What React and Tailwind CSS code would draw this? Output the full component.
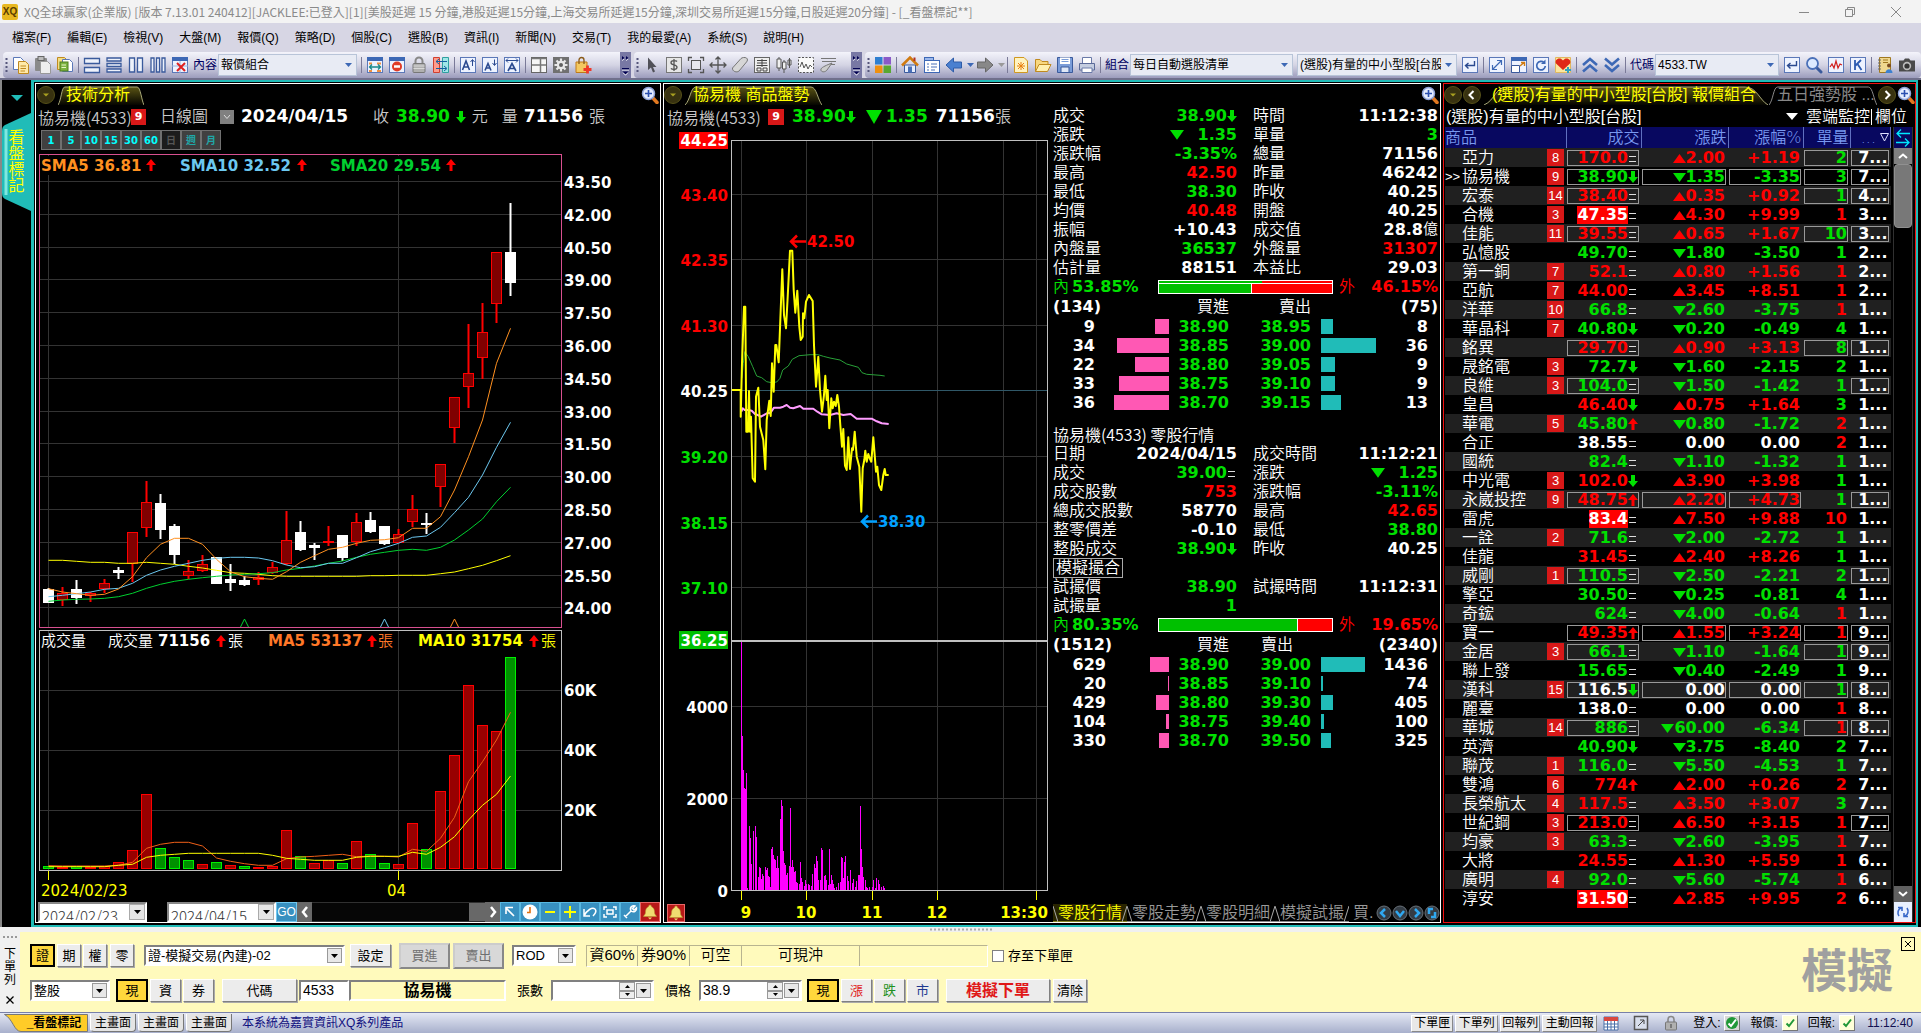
import React from 'react';

const GREEN = '#00e000';
const RED = '#ff0000';
const NUM = "font-['DejaVu_Sans','Noto_Sans_CJK_TC',sans-serif] font-bold";

/* ---------- small glyphs ---------- */

function Arrow({ dir, className = 'h-3.5 w-[10px]' }) {
  const color = dir === 'up' ? RED : GREEN;
  return (
    <svg viewBox="0 0 10 14" className={`${className} shrink-0`}>
      <path d={dir === 'up' ? 'M3.500 13V7H0L5 1L10 7H6.500V13Z' : 'M3 1V7H0L5 13L10 7H7V1Z'} fill={color} />
    </svg>
  );
}

function Tri({ up, className = 'w-[13px]' }) {
  return (
    <svg viewBox="0 0 13 10" className={`${className} shrink-0`}>
      <path d={up ? 'M0 10L6.500 1L13 10Z' : 'M0 1H13L6.500 10Z'} fill={up ? RED : GREEN} />
    </svg>
  );
}

function Equal() {
  return (
    <svg viewBox="0 0 10 14" className="h-3.5 w-[10px] shrink-0">
      <path d="M1 5.500H8M1 10.500H8" stroke="#ddd" fill="none" />
    </svg>
  );
}

function Mark({ kind }) {
  if (kind === 'd') return <Arrow dir="down" />;
  if (kind === 'u') return <Arrow dir="up" />;
  return <Equal />;
}

function Magnifier({ className = '' }) {
  return (
    <svg viewBox="0 0 18 18" className={`h-[18px] w-[18px] shrink-0 ${className}`}>
      <path d="M11 11L16 16.500" stroke="#e07820" strokeWidth="3.500" strokeLinecap="round" />
      <circle cx="7.500" cy="7.500" r="6" fill="#e4ecff" stroke="#8fa3d8" strokeWidth="1.500" />
      <path d="M7.500 4V11M4 7.500H11" stroke="#2a4fb0" strokeWidth="1.600" />
    </svg>
  );
}

function Bell({ className = '' }) {
  return (
    <span className={`flex items-center justify-center border border-[#e86868] bg-[#b81818] ${className}`}>
      <svg viewBox="0 0 16 16" className="h-4 w-4">
        <path d="M8 1C9 1 9.500 2 9.500 2.700C12 3.700 12.500 6 12.500 8.500C12.500 10.500 14 11 14.500 12.500H1.500C2 11 3.500 10.500 3.500 8.500C3.500 6 4 3.700 6.500 2.700C6.500 2 7 1 8 1Z" fill="#f0dc70" stroke="#b89830" strokeWidth="0.600" />
        <path d="M6 13.500H10L8 15.500Z" fill="#f0dc70" />
      </svg>
    </span>
  );
}

/* ---------- toolbar icons ---------- */

const page = (x, y, fill = '#fff', stroke = '#6a7aa8') => (
  <path d={`M${x} ${y}H${x + 7}L${x + 10} ${y + 3}V${y + 12}H${x}Z`} fill={fill} stroke={stroke} />
);
const frame = (fill = '#eef3ff', stroke = '#5b78b8') => <rect x="1.500" y="1.500" width="15" height="15" fill={fill} stroke={stroke} />;
const windowFrame = (
  <g>
    {frame()}
    <path d="M1 1H17V5H1Z" fill="#3d68b5" />
  </g>
);

const ICONS = {
  copy: <g>{page(1.5, 1.5, '#fff', '#5b78b8')}{page(6.5, 5.5, '#ffe9a8', '#c08a20')}<path d="M8.500 10H14M8.500 12.500H14M8.500 15H13" stroke="#c08a20" /></g>,
  paste: <g><rect x="1" y="2" width="12" height="13" rx="1" fill="#8a8a8a" /><rect x="4" y="0.500" width="6" height="4" fill="#bbb" stroke="#666" />{page(6.5, 5.5, '#eee', '#999')}</g>,
  copyGreen: <g>{page(1.5, 1.5, '#f3dc80', '#c08a20')}{page(6.5, 3.5, '#fff', '#5b78b8')}<rect x="4" y="6" width="8" height="9" fill="#7cb342" stroke="#4d7d1e" /><path d="M5.500 9H10M5.500 11.500H10" stroke="#e8f5c8" /></g>,
  rows2: <path d="M1.500 2.500H16.500V7.500H1.500ZM1.500 11.500H16.500V16.500H1.500Z" fill="#eef2fb" stroke="#3a5a9c" strokeWidth="1.300" />,
  rows3: <path d="M2 2H16V5H2ZM2 7.500H16V10.500H2ZM2 13H16V16H2Z" fill="#eef2fb" stroke="#3a5a9c" strokeWidth="1.300" />,
  cols2: <path d="M2.500 2H7.500V16H2.500ZM10.500 2H15.500V16H10.500Z" fill="#eef2fb" stroke="#3a5a9c" strokeWidth="1.300" />,
  cols3: <path d="M2 2H5V16H2ZM7.500 2H10.500V16H7.500ZM13 2H16V16H13Z" fill="#eef2fb" stroke="#3a5a9c" strokeWidth="1.300" />,
  closeWin: <g>{windowFrame}<path d="M9 5V17M1 10H17" stroke="#9cb4dc" /><path d="M6 7L14 15M14 7L6 15" stroke="#e02020" strokeWidth="2" /></g>,
  winH: <g>{windowFrame}<path d="M3 6.500H6V8.500H3ZM11 6.500H15V8.500H11ZM3 14H6V16H3ZM11 14H15V16H11Z" fill="#f09040" /><path d="M4 11H14M6 8.500L3.500 11L6 13.500M12 8.500L14.500 11L12 13.500" stroke="#188a8a" strokeWidth="1.300" fill="none" /></g>,
  winStop: <g>{windowFrame}<circle cx="9" cy="10.500" r="5" fill="#e03c28" /><path d="M6 10.500H12" stroke="#fff" strokeWidth="2.500" /></g>,
  lock: <g><path d="M5.500 8V5A3.500 3.500 0 0 1 12.500 5V8" fill="none" stroke="#888" strokeWidth="2" /><rect x="3" y="7.500" width="12" height="9" rx="1" fill="#b0b0b0" stroke="#777" /><path d="M3.500 10H14.500M3.500 12.500H14.500" stroke="#d8d8d8" /></g>,
  swap: <g><path d="M1.500 1.500H7.500V16.500H1.500Z" fill="#ff9c8c" stroke="#d04030" /><path d="M10.500 1.500H16.500V16.500H10.500Z" fill="#a0e8e8" stroke="#30a0a0" /><path d="M4 5.500H15M7 3L4 5.500L7 8M14 12.500H4M12 10L15 12.500L12 15" stroke="#1560a0" fill="none" /></g>,
  fontUp: <g>{frame()}<path d="M3.500 14L7 5L10.500 14M4.500 11H9.500" stroke="#2b4a90" strokeWidth="1.600" fill="none" /><path d="M13.500 10V4M11.500 6L13.500 3.500L15.500 6" stroke="#2b4a90" fill="none" /></g>,
  fontDown: <g>{frame()}<path d="M4 14.500L7 7.500L10 14.500M5 12H9" stroke="#2b4a90" strokeWidth="1.600" fill="none" /><path d="M13.500 3.500V9M11.500 7L13.500 9.500L15.500 7" stroke="#2b4a90" fill="none" /></g>,
  fontWide: <g>{frame()}<path d="M5 15L9 7.500L13 15M6.500 12.500H11.500" stroke="#2b4a90" strokeWidth="1.600" fill="none" /><path d="M3 4.500H15M5 2.500L3 4.500L5 6.500M13 2.500L15 4.500L13 6.500" stroke="#2b4a90" fill="none" /></g>,
  grid: <g><rect x="1.500" y="1.500" width="15" height="15" fill="#f6f6f6" stroke="#666" /><path d="M1.500 2.500H16.500M10.500 2V16M2 9H16" stroke="#777" strokeWidth="1.500" /></g>,
  gear: <g><rect x="1" y="1" width="16" height="16" fill="#707070" /><path d="M9 2.500V15.500M2.500 9H15.500M4.500 4.500L13.500 13.500M13.500 4.500L4.500 13.500" stroke="#e8e8e8" strokeWidth="2.200" /><circle cx="9" cy="9" r="4.200" fill="#e8e8e8" /><circle cx="9" cy="9" r="2" fill="#606060" /></g>,
  bag: <g><path d="M2 6H13V16.500H2Z" fill="#f4c860" stroke="#c07a18" /><path d="M5 8V4A2.500 2.500 0 0 1 10 4V8" fill="none" stroke="#8a5a18" strokeWidth="1.300" /><path d="M13.500 9.500V17.500M9.500 13.500H17.500" stroke="#f03828" strokeWidth="2.800" /></g>,
  cursor: <path d="M5 1.500V14L8 11.500L10 16.500L12 15.500L10 11H13.500Z" fill="#505058" />,
  dollar: <g><rect x="1.500" y="1.500" width="15" height="15" fill="#e6e6e6" stroke="#777" /><path d="M12 5.500C11 4.300 6 4 6 6.700C6 9.500 12 8.300 12 11.300C12 14 7 13.800 6 12.300M9 3V15" stroke="#555" strokeWidth="1.300" fill="none" /></g>,
  bracket: <g><path d="M1.500 5V1.500H5M13 1.500H16.500V5M16.500 13V16.500H13M5 16.500H1.500V13" stroke="#555" fill="none" strokeWidth="1.300" /><rect x="4.500" y="4.500" width="9" height="9" fill="#e8e8ee" stroke="#555" /></g>,
  move: <path d="M9 1V17M1 9H17M6.500 3.500L9 1L11.500 3.500M6.500 14.500L9 17L11.500 14.500M3.500 6.500L1 9L3.500 11.500M14.500 6.500L17 9L14.500 11.500" stroke="#555" fill="none" strokeWidth="1.300" />,
  eraser: <path d="M1.500 12L10 2.500C11 1.500 14 1 15.500 2C17 3 16.500 5 15.500 6L8 15C6 17 1 15.500 1.500 12Z" fill="#d6d6d6" stroke="#777" />,
  chip: <g><rect x="1.500" y="1.500" width="15" height="15" fill="#eee" stroke="#666" /><path d="M4 4.500H14M4 7H14M3.500 9.500H14.500M4 12H8V15H4ZM10 12H14V15H10ZM9 3V11" stroke="#444" fill="none" /></g>,
  candles: <path d="M4 1V3M4 12V15M2 3H6V12H2ZM9 4V6M9 13V17M7.500 6H11V13H7.500ZM14.500 2V12M13 4H16V9H13Z" fill="#f0f0f0" stroke="#555" />,
  wave: <g><rect x="1.500" y="1.500" width="15" height="15" fill="#fafafa" stroke="#555" strokeDasharray="2 1.500" /><path d="M3 11L5 6L7 12L9 8L11 13L13 9L15 11" stroke="#555" fill="none" /></g>,
  brush: <g><path d="M2 2.500H17M3 5.500H17M9 8.500H16" stroke="#777" /><path d="M13 7L8 14C6 17 1 16 2 13C3 11 8 9 13 7Z" fill="#ccc" stroke="#777" /></g>,
  squares: <g><path d="M1 1H8.500V8.500H1Z" fill="#2f7fd0" /><path d="M9.500 1H17V8.500H9.500Z" fill="#8a5ac8" /><path d="M1 9.500H8.500V17H1Z" fill="#f09010" /><path d="M9.500 9.500H17V17H9.500Z" fill="#58a832" /></g>,
  home: <g><path d="M3.500 9H14.500V16.500H3.500Z" fill="#e8eefc" stroke="#3a5a9c" /><path d="M1 9.500L9 1.500L17 9.500" stroke="#d07a10" strokeWidth="2.500" fill="none" /><path d="M7 10.500H11V16.500H7Z" fill="#4a70b8" /><path d="M12.500 1.500H14.500V5H12.500Z" fill="#b03020" /></g>,
  list: <g><rect x="1.500" y="1.500" width="9" height="4" fill="#9cb8ec" stroke="#3d68b5" /><rect x="1.500" y="4.500" width="15" height="12" fill="#fff" stroke="#3d68b5" /><path d="M4 8H6M4 11H6M4 14H6M8 8H14M8 11H14M8 14H12" stroke="#4a70b8" /></g>,
  left: <path d="M1 9L8.500 2V6H16.500V12H8.500V16Z" fill="#4a80d0" stroke="#2f5ca8" />,
  right: <path d="M17 9L9.500 2V6H1.500V12H9.500V16Z" fill="#888" stroke="#666" />,
  fresh: <g><path d="M2.500 1.500H12L15.500 5V16.500H2.500Z" fill="#fff3c0" stroke="#d09820" /><path d="M9 6V14M5 10H13M6 7L12 13M12 7L6 13" stroke="#e88010" /></g>,
  open: <g><path d="M1.500 15.500V3.500H6L8 5.500H14V8" fill="#f8d880" stroke="#c08a20" /><path d="M1.500 15.500L5 8.500H17L13.500 15.500Z" fill="#fff0b0" stroke="#c08a20" /></g>,
  save: <g><path d="M1.500 1.500H16.500V16.500H1.500Z" fill="#7a9cd8" stroke="#3a5a9c" /><path d="M4 1.500H14V8H4Z" fill="#fff" /><path d="M5 11H13V16.500H5Z" fill="#dfe8f8" stroke="#3a5a9c" /><path d="M5.500 3.500H12.500M5.500 5.500H12.500" stroke="#7a9cd8" /></g>,
  print: <g><path d="M4.500 1.500H13.500V8H4.500Z" fill="#fff" stroke="#6a7aa8" /><path d="M1.500 7.500H16.500V14H1.500Z" fill="#c4cde0" stroke="#5a6a98" /><path d="M4 12H14V16.500H4Z" fill="#fff" stroke="#6a7aa8" /></g>,
  enter: <g>{frame()}<path d="M13.500 5V9.500H5M7.500 7L4.500 9.500L7.500 12.500" stroke="#2b4a90" strokeWidth="1.400" fill="none" /></g>,
  expand: <g>{frame()}<path d="M5 13L13 5M9 4.500H13.500V9M4.500 9V13.500H9" stroke="#3d68b5" strokeWidth="1.200" fill="none" /></g>,
  popout: <g>{windowFrame}<path d="M1.500 9.500H9.500V16.500H1.500Z" fill="#fff" stroke="#3a5a9c" /><path d="M10 10L14 6.500M11 6.500H14.500V10" stroke="#d07a10" strokeWidth="1.400" fill="none" /></g>,
  refresh: <g>{frame()}<path d="M12 6.500A4.300 4.300 0 1 0 13.300 10" stroke="#3d68b5" strokeWidth="1.700" fill="none" /><path d="M13.500 3.500V8H9Z" fill="#3d68b5" /></g>,
  heart: <g><path d="M1.500 1.500H16.500V16.500H1.500Z" fill="#fbe7a0" stroke="#e0b860" /><path d="M9 14L2 7.500C0 3.500 6 0 9 4.500C12 0 18 3.500 16 7.500Z" fill="#e02818" /><path d="M14 11V17M11 14H17" stroke="#30a0c0" strokeWidth="2" /></g>,
  up2: <path d="M2 9L9 3L16 9M2 15.500L9 9.500L16 15.500" stroke="#3d68b5" strokeWidth="2.600" fill="none" />,
  down2: <path d="M2 2.500L9 8.500L16 2.500M2 9L9 15L16 9" stroke="#3d68b5" strokeWidth="2.600" fill="none" />,
  search: <g><path d="M11.500 11.500L16 16" stroke="#3a5a9c" strokeWidth="3" strokeLinecap="round" /><circle cx="7.500" cy="7.500" r="5.500" fill="#dceaff" stroke="#4a70b8" strokeWidth="1.800" /></g>,
  pulse: <g>{frame()}<path d="M3 11L5 8L7 12L9 5L11 12L13 8L15 9" stroke="#d02020" fill="none" strokeWidth="1.200" /></g>,
  kline: <g>{frame()}<path d="M6 4V14M12 4L6.500 9.500M8.500 8L12.500 14" stroke="#2b5ab0" strokeWidth="1.800" fill="none" /></g>,
  book: <g><path d="M3.500 1.500H14.500V16.500H3.500Z" fill="#f0d890" stroke="#a07820" /><path d="M2 4H5M2 7H5M2 10H5M2 13H5" stroke="#666" /><path d="M7 4H12M7 6.500H12" stroke="#a07820" /><circle cx="13" cy="9.500" r="2" fill="#7a4a20" /><path d="M9.500 17C9.500 12 16.500 12 16.500 17Z" fill="#3d80d0" /></g>,
  camera: <g><path d="M1 4.500H5.500L7 2.500H11L12.500 4.500H17V15.500H1Z" fill="#4a4a4a" /><circle cx="9" cy="10" r="4.200" fill="#bbb" /><circle cx="9" cy="10" r="2.600" fill="#333" /></g>,
};

function ToolIcon({ name }) {
  return (
    <button type="button" aria-label={name} className="h-[18px] w-[18px] shrink-0">
      <svg viewBox="0 0 18 18" className="h-[18px] w-[18px]">{ICONS[name]}</svg>
    </button>
  );
}

const Sep = () => <span className="h-4 w-px shrink-0 bg-[#7a7a98]" />;
const Grip = () => (
  <svg viewBox="0 0 3 16" className="ml-0.5 h-4 w-[3px] shrink-0">
    <path d="M1.500 1V16" stroke="#55557a" strokeWidth="2" strokeDasharray="2 2" />
  </svg>
);
const SmallCaret = ({ color = '#3d68b5', className = '' }) => (
  <svg viewBox="0 0 7 4" className={`h-1 w-[7px] shrink-0 ${className}`}><path d="M0 0H7L3.500 4Z" fill={color} /></svg>
);

function More() {
  return (
    <button type="button" aria-label="more" className="ml-auto flex h-[26px] w-[11px] shrink-0 items-center bg-[#7878a4]">
      <svg viewBox="0 0 11 26" className="h-[26px] w-[11px]">
        <path d="M2 5L4.500 7L2 9ZM6 5L8.500 7L6 9ZM2 17H9V18.500H2ZM2.500 20.500H8.500L5.500 23.500Z" fill="#fff" />
        <path d="M2 4L4.500 6L2 8ZM6 4L8.500 6L6 8ZM2 16H9V17.500H2ZM2.500 19.500H8.500L5.500 22.500Z" fill="#000050" />
      </svg>
    </button>
  );
}

function ToolCombo({ label, value, className }) {
  return (
    <label className="flex shrink-0 items-center text-[12px] text-[#000060]">
      {label && <span className="mr-px whitespace-nowrap">{label}</span>}
      <span className={`relative flex h-[22px] items-center overflow-hidden border border-[#b8c4d8] bg-[#e8ebf4] ${className}`}>
        <select aria-label={label || value} className="h-full w-full appearance-none bg-transparent pl-0.5 text-[12px] text-black">
          <option>{value}</option>
        </select>
        <span className="pointer-events-none absolute right-0 flex h-full w-[15px] items-center justify-center bg-[#e8ebf4]"><SmallCaret /></span>
      </span>
    </label>
  );
}

const BAR = 'flex h-[26px] items-center gap-1 rounded-sm bg-linear-to-b from-[#f4f4fb] via-[#d4d4e4] to-[#9c9cbc]';

function Toolbars() {
  return (
    <div className="flex h-[26px] gap-[3px] overflow-hidden bg-[#d7d6e4] pl-[3px]">
      <div className={`${BAR} w-[628px] shrink-0`}>
        <Grip />
        {['copy', 'paste', 'copyGreen'].map((n) => <ToolIcon key={n} name={n} />)}
        <Sep />
        {['rows2', 'rows3', 'cols2', 'cols3', 'closeWin'].map((n) => <ToolIcon key={n} name={n} />)}
        <ToolCombo label="內容" value="報價組合" className="w-[139px]" />
        <Sep />
        {['winH', 'winStop', 'lock', 'swap'].map((n) => <ToolIcon key={n} name={n} />)}
        <Sep />
        {['fontUp', 'fontDown', 'fontWide'].map((n) => <ToolIcon key={n} name={n} />)}
        <Sep />
        {['grid', 'gear', 'bag'].map((n) => <ToolIcon key={n} name={n} />)}
        <More />
      </div>
      <div className={`${BAR} w-[228px] shrink-0`}>
        <Grip />
        {['cursor', 'dollar', 'bracket', 'move', 'eraser', 'chip', 'candles', 'wave', 'brush'].map((n) => <ToolIcon key={n} name={n} />)}
        <More />
      </div>
      <div className={`${BAR} min-w-0 flex-1`}>
        <Grip />
        <ToolIcon name="squares" />
        <Sep />
        <ToolIcon name="home" />
        <ToolIcon name="list" />
        <ToolIcon name="left" /><SmallCaret className="-mr-0.5" />
        <ToolIcon name="right" /><SmallCaret color="#999" className="-mr-0.5" />
        <Sep />
        {['fresh', 'open', 'save', 'print'].map((n) => <ToolIcon key={n} name={n} />)}
        <Sep />
        <ToolCombo label="組合" value="每日自動選股清單" className="w-[163px]" />
        <ToolCombo value="(選股)有量的中小型股[台股]" className="w-[160px]" />
        <ToolIcon name="enter" />
        <Sep />
        {['expand', 'popout', 'refresh', 'heart'].map((n) => <ToolIcon key={n} name={n} />)}
        <Sep />
        {['up2', 'down2'].map((n) => <ToolIcon key={n} name={n} />)}
        <Sep />
        <ToolCombo label="代碼" value="4533.TW" className="w-[124px]" />
        {['enter', 'search', 'pulse', 'kline'].map((n) => <ToolIcon key={n} name={n} />)}
        <Sep />
        <ToolIcon name="book" />
        <ToolIcon name="camera" />
      </div>
    </div>
  );
}

/* ---------- title and menu ---------- */

const MENU = ['檔案(F)', '編輯(E)', '檢視(V)', '大盤(M)', '報價(Q)', '策略(D)', '個股(C)', '選股(B)', '資訊(I)', '新聞(N)', '交易(T)', '我的最愛(A)', '系統(S)', '說明(H)'];

function TitleBar() {
  return (
    <header className="flex h-[23px] items-center bg-[#f3f3f3] pl-0.5 text-[#8a8a8a]">
      <span className="flex h-4 w-4 items-center justify-center rounded-xs bg-[#e8b820] text-[10px] font-bold text-[#5a3c00]">XQ</span>
      <h1 className="ml-1.5 truncate font-['Noto_Sans_CJK_TC',sans-serif] text-[12px] leading-[23px]">
        XQ全球贏家(企業版) [版本 7.13.01 240412][JACKLEE:已登入][1][美股延遲 15 分鐘,港股延遲15分鐘,上海交易所延遲15分鐘,深圳交易所延遲15分鐘,日股延遲20分鐘] - [_看盤標記**]
      </h1>
      <div className="ml-auto flex items-center gap-9 pr-5">
        <button type="button" aria-label="最小化"><svg viewBox="0 0 10 10" className="h-2.5 w-2.5"><path d="M0 5.500H10" stroke="#888" /></svg></button>
        <button type="button" aria-label="還原"><svg viewBox="0 0 10 10" className="h-2.5 w-2.5"><path d="M0.500 2.500H7.500V9.500H0.500ZM2.500 2.500V0.500H9.500V7.500H7.500" fill="none" stroke="#888" /></svg></button>
        <button type="button" aria-label="關閉"><svg viewBox="0 0 10 10" className="h-2.5 w-2.5"><path d="M0 0L10 10M10 0L0 10" stroke="#888" /></svg></button>
      </div>
    </header>
  );
}

function MenuBar() {
  return (
    <nav className="flex h-[29px] items-center gap-4 bg-[#d7d6e4] pl-3 text-[12px] text-black">
      {MENU.map((m) => <button type="button" key={m} className="whitespace-nowrap">{m}</button>)}
    </nav>
  );
}

/* ---------- panel chrome ---------- */

function RoundButton({ label, d = 'M6 7.500H12L9 10.500Z', stroke }) {
  return (
    <button type="button" aria-label={label} className="flex h-[18px] w-[18px] shrink-0 items-center justify-center rounded-full border border-[#555018] bg-[#383210]">
      <svg viewBox="0 0 18 18" className="h-[18px] w-[18px] shrink-0">
        <path d={d} fill={stroke ? 'none' : '#a8a020'} stroke={stroke ? '#fff' : 'none'} strokeWidth="2" />
      </svg>
    </button>
  );
}

function Tab({ children, active, className = '' }) {
  return (
    <button type="button" className={`relative flex h-[19px] items-center pl-2 text-[16px] leading-none ${active ? 'text-[#ffff00]' : 'text-[#888]'} ${className}`}>
      <svg viewBox="0 0 100 19" preserveAspectRatio="none" className="absolute inset-0 h-full w-full">
        <defs>
          <linearGradient id="tabFill" x1="0" y1="0" x2="0" y2="1"><stop offset="0" stopColor="#5a5414" /><stop offset="1" stopColor="#050500" /></linearGradient>
        </defs>
        <path d="M0 19C4 14 4 1 8 1H92C96 1 97 14 100 19" fill={active ? 'url(#tabFill)' : '#000'} stroke={active ? '#a8a878' : '#888'} vectorEffect="non-scaling-stroke" />
      </svg>
      <span className="relative whitespace-nowrap">{children}</span>
    </button>
  );
}

/* ---------- daily chart ---------- */

// [isRed, bodyTop, bodyBottom, wickTop, wickBottom] in thirds of a pixel below y=310
const CANDLES = [
  [0, 837, 878, 834, 878], [1, 850, 870, 831, 888], [0, 837, 864, 810, 881], [1, 850, 860, 845, 876], [1, 820, 837, 808, 850],
  [0, 780, 788, 770, 806], [1, 667, 763, 667, 815], [1, 577, 656, 513, 681], [0, 579, 660, 552, 687], [0, 648, 735, 642, 763],
  [1, 783, 797, 750, 807], [1, 763, 785, 735, 785], [0, 741, 822, 741, 822], [0, 807, 819, 762, 843], [0, 810, 825, 798, 828],
  [1, 802, 812, 786, 825], [1, 772, 791, 755, 791], [1, 691, 764, 603, 764], [0, 666, 720, 633, 722], [0, 705, 714, 699, 750],
  [1, 693, 699, 648, 708], [0, 675, 744, 675, 753], [1, 637, 697, 609, 708], [0, 630, 666, 606, 669], [0, 648, 702, 648, 705],
  [1, 673, 700, 657, 700], [1, 598, 637, 555, 651], [0, 638, 645, 609, 672], [1, 463, 533, 463, 591], [1, 262, 356, 262, 399],
  [1, 190, 233, 42, 293], [1, 67, 146, -21, 207], [1, -173, -18, -173, 39], [0, -174, -81, -321, -42],
];
const SMA5 = [836, 846, 851, 856, 853, 837, 800, 743, 703, 685, 685, 703, 748, 785, 800, 805, 808, 785, 757, 737, 718, 712, 700, 691, 689, 683, 655, 655, 620, 540, 440, 330, 160, 55];
const SMA10 = [860, 856, 851, 846, 838, 835, 820, 796, 780, 769, 760, 751, 745, 742, 742, 744, 752, 765, 773, 770, 760, 760, 743, 725, 713, 700, 682, 678, 652, 608, 562, 495, 412, 337];
const SMA20 = [874, 870, 868, 867, 865, 860, 850, 835, 823, 814, 808, 803, 799, 795, 793, 791, 788, 780, 775, 768, 760, 753, 742, 733, 727, 721, 718, 721, 712, 690, 660, 627, 575, 532];
const SMA60 = [751, 751, 754, 757, 757, 760, 760, 757, 760, 763, 769, 774, 781, 788, 790, 793, 797, 799, 799, 799, 799, 799, 799, 797, 797, 796, 796, 796, 791, 786, 776, 766, 752, 737];
const VOLUMES = ['g737', 'r741', 'g737', 'r740', 'r737', 'r727', 'r691', 'r523', 'g685', 'g712', 'g721', 'r733', 'g727', 'r734', 'g739', 'r741', 'r737', 'r631', 'g709', 'r730', 'r721', 'g730', 'r664', 'g703', 'g730', 'r733', 'r610', 'g688', 'r514', 'r406', 'r196', 'r316', 'r334', 'g112'];
const VMA5 = [737, 738, 738, 738, 738, 736, 727, 685, 673, 667, 667, 678, 714, 724, 731, 736, 736, 716, 711, 709, 706, 703, 710, 708, 709, 711, 688, 694, 655, 592, 485, 425, 360, 277];
const VMA10 = [740, 740, 740, 740, 740, 736, 733, 712, 706, 703, 700, 700, 700, 700, 700, 700, 706, 715, 718, 721, 721, 721, 712, 709, 709, 709, 697, 703, 682, 650, 600, 556, 523, 468];

const candleX = (i) => 48.5 + i * 14;
const linePoints = (values, base) => values.map((v, i) => `${candleX(i)},${(base + v / 3).toFixed(1)}`).join(' ');
const PRICE_LABELS = [['43.50', 181.5], ['42.00', 214.5], ['40.50', 247.5], ['39.00', 279.5], ['37.50', 312.5], ['36.00', 345.5], ['34.50', 378.5], ['33.00', 411.5], ['31.50', 443.5], ['30.00', 476.5], ['28.50', 509.5], ['27.00', 542.5], ['25.50', 575.5], ['24.00', 607.5]];

const SvgUp = ({ x, y }) => <path d={`M${x - 1.5} ${y + 6}V${y}H${x - 5}L${x} ${y - 6}L${x + 5} ${y}H${x + 1.5}V${y + 6}Z`} fill={RED} />;

function DailyChart() {
  return (
    <svg viewBox="36 152 624 750" preserveAspectRatio="xMinYMin meet" className={`${NUM} min-h-0 w-full flex-1 text-[15px]`}>
      <path d={PRICE_LABELS.map(([, y]) => `M40 ${y}H561`).join('')} stroke="#333" />
      <path d="M48.500 155V627M398.500 155V627M48.500 631V870M398.500 631V870M40 690.500H561M40 750.500H561M40 810.500H561" stroke="#333" />
      <rect x="41" y="156" width="408" height="19" fill="#000" />
      <rect x="39.500" y="154.500" width="522" height="473" fill="none" stroke="#d85090" />
      <rect x="39.500" y="630.500" width="522" height="240" fill="none" stroke="#c0c0c0" />
      <path d="M48.500 871V880M398.500 871V880" stroke="#ffff00" />
      {CANDLES.map(([red, a, b, c, d], i) => (
        <g key={i}>
          <path d={`M${candleX(i)} ${Math.round(310 + c / 3)}V${Math.round(310 + d / 3)}`} stroke={red ? '#f00' : '#fff'} strokeWidth="2" />
          <rect x={candleX(i) - 5} y={Math.round(310 + a / 3) + 0.5} width="10" height={Math.max(1, Math.round((b - a) / 3) - 1)} fill={red ? '#800000' : '#fff'} stroke={red ? '#f00' : '#fff'} />
        </g>
      ))}
      {VOLUMES.map((v, i) => {
        const top = Math.round(620 + Number(v.slice(1)) / 3);
        const red = v[0] === 'r';
        return <rect key={i} x={candleX(i) - 5} y={top + 0.5} width="10" height={868 - top} fill={red ? '#980000' : '#009000'} stroke={red ? '#f00' : '#00f000'} />;
      })}
      <g fill="none">
        <polyline points={linePoints(SMA60, 310)} stroke="#ffff00" />
        <polyline points={linePoints(SMA20, 310)} stroke="#00d030" />
        <polyline points={linePoints(SMA10, 310)} stroke="#6cc8f0" />
        <polyline points={linePoints(SMA5, 310)} stroke="#ff9020" />
        <polyline points={linePoints(VMA5, 620)} stroke="#f06018" />
        <polyline points={linePoints(VMA10, 620)} stroke="#ffff00" />
        <path d="M240.500 627L244.500 619L248.500 627" stroke="#00d030" />
        <path d="M380.500 627L384.500 619L388.500 627" stroke="#6cc8f0" />
        <path d="M450.500 627L454.500 619L458.500 627" stroke="#ff9020" />
      </g>
      <text x="41" y="171" fill="#ff9020">SMA5 36.81</text><SvgUp x={151} y={165} />
      <text x="180" y="171" fill="#6cc8f0">SMA10 32.52</text><SvgUp x={302} y={165} />
      <text x="330" y="171" fill="#00d030">SMA20 29.54</text><SvgUp x={451} y={165} />
      <g fill="#fff">
        {PRICE_LABELS.map(([t, y]) => <text key={t} x="564" y={y + 6}>{t}</text>)}
        <text x="564" y="696">60K</text><text x="564" y="756">40K</text><text x="564" y="816">20K</text>
        <text x="41" y="646" fontWeight="350">成交量</text>
        <text x="108" y="646" fontWeight="350">成交量</text>
        <text x="158" y="646">71156</text>
        <text x="228" y="646" fontWeight="350">張</text>
      </g>
      <SvgUp x={221} y={641} />
      <text x="268" y="646" fill="#ff7828">MA5 53137</text><SvgUp x={372} y={641} />
      <text x="378" y="646" fill="#ff7828" fontWeight="350">張</text>
      <text x="418" y="646" fill="#ffff00">MA10 31754</text><SvgUp x={534} y={641} />
      <text x="541" y="646" fill="#ffff00" fontWeight="350">張</text>
      <g fill="#ffff00" fontWeight="400"><text x="41" y="896">2024/02/23</text><text x="387" y="896">04</text></g>
    </svg>
  );
}

const PERIODS = ['1', '5', '10', '15', '30', '60', '日', '週', '月'];
const CHART_TOOLS = [
  ['指標', <path key="a" d="M13 13L5 5M5 11V4.500H12" stroke="#fff" strokeWidth="1.600" fill="none" />],
  ['時間', <g key="a"><circle cx="9" cy="9" r="7.500" fill="#fff" /><path d="M9 4V9.500H6" stroke="#e07010" strokeWidth="1.600" fill="none" /></g>],
  ['縮小', <path key="a" d="M4 9H14" stroke="#ffff00" strokeWidth="2" />],
  ['放大', <path key="a" d="M3 9H15M9 3V15" stroke="#ffff00" strokeWidth="2" />],
  ['復原', <path key="a" d="M3 6V13H9M3 13C6 7 11 4 14 6C16 8 14 11 12 13" stroke="#fff" strokeWidth="1.500" fill="none" />],
  ['全螢幕', <path key="a" d="M3 7V4H6M12 4H15V7M15 11V14H12M6 14H3V11M6 7H12V11H6Z" stroke="#fff" strokeWidth="1.500" fill="none" />],
  ['設定', <path key="a" d="M4 14L10 8M10 8C8 4 12 2 14 3L11.500 5.500L13 7L15.500 5C16 8 13 10 10 8M3 12L6 15" stroke="#fff" strokeWidth="1.500" fill="none" />],
];

function DateSelect({ value, label, className }) {
  return (
    <span className={`relative flex h-5 overflow-hidden border-2 border-[#888] border-b-white border-r-white bg-white ${className}`}>
      <select aria-label={label} className="h-6 w-full appearance-none bg-white pl-0.5 font-['Noto_Sans_CJK_TC',sans-serif] text-[15px] font-light leading-6 text-[#333]">
        <option>{value}</option>
      </select>
      <span className="pointer-events-none absolute right-0 top-0 flex h-4 w-4 items-center justify-center border border-[#aaa] bg-[#e6e6e6]"><SmallCaret color="#000" /></span>
    </span>
  );
}

function DailyPanel() {
  return (
    <section className="flex min-w-0 flex-col border border-white bg-black">
      <div className="flex h-[22px] items-center gap-[3px] pl-px">
        <RoundButton label="選單" />
        <Tab active className="w-[86px]">技術分析</Tab>
        <Magnifier className="ml-auto mr-px" />
      </div>
      <div className={`${NUM} flex h-[22px] items-center whitespace-nowrap pl-0.5 text-[17px] text-white`}>
        <h2 className="w-[93px] font-['Noto_Sans_CJK_TC',sans-serif] text-[16px] font-[350] text-[#c8c8c8]">協易機(4533)</h2>
        <span className="flex h-4 w-[15px] items-center justify-center bg-[#d81818] text-[11px]">9</span>
        <span className="ml-3.5 text-[16px] font-[350] text-[#c8c8c8]">日線圖</span>
        <button type="button" aria-label="週期" className="ml-3 flex h-3.5 w-3.5 items-center justify-center bg-[#808080]">
          <svg viewBox="0 0 8 6" className="h-1.5 w-2"><path d="M1 1L4 4.500L7 1" stroke="#ddd" fill="none" /></svg>
        </button>
        <span className="ml-[7px] w-[118px]">2024/04/15</span>
        <span className="ml-3.5 text-[16px] font-[350] text-[#c8c8c8]">收</span>
        <span className="ml-[7px] text-[#00e000]">38.90</span>
        <Arrow dir="down" className="ml-1.5 h-3.5 w-[10px]" />
        <span className="ml-1.5 text-[16px] font-[350] text-[#c8c8c8]">元</span>
        <span className="ml-3.5 text-[16px] font-[350] text-[#c8c8c8]">量</span>
        <span className="ml-1.5">71156</span>
        <span className="ml-1.5 text-[16px] font-[350] text-[#c8c8c8]">張</span>
      </div>
      <div className="flex h-6 items-center pl-[5px]">
        {PERIODS.map((p, i) => (
          <button type="button" key={p} className={`${NUM} h-5 w-5 border border-[#707070] text-[10px] ${i === 6 ? 'bg-[#1c1c1c] text-[#555]' : i > 6 ? 'bg-[#404040] text-[#20a8a8]' : 'bg-[#404040] text-[#00ffff]'}`}>{p}</button>
        ))}
      </div>
      <DailyChart />
      <div className="flex h-5 bg-black">
        <DateSelect label="起始日" value="2024/02/23" className="ml-0.5 w-[109px]" />
        <DateSelect label="結束日" value="2024/04/15" className="ml-5 w-[109px]" />
        <button type="button" className="w-[21px] border border-[#70c8f0] bg-[#3890c0] text-[12px] text-white">GO</button>
        <button type="button" aria-label="往前" className="flex w-[15px] items-center justify-center bg-[#686868]"><svg viewBox="0 0 8 12" className="h-3 w-2"><path d="M6 1L2 6L6 11" stroke="#fff" strokeWidth="2.500" fill="none" /></svg></button>
        <div className="flex flex-1 justify-end border-y border-[#303030] bg-[#060606]"><span className="w-4 bg-[#686868]" /></div>
        <button type="button" aria-label="往後" className="flex w-[15px] items-center justify-center bg-[#686868]"><svg viewBox="0 0 8 12" className="h-3 w-2"><path d="M2 1L6 6L2 11" stroke="#fff" strokeWidth="2.500" fill="none" /></svg></button>
        {CHART_TOOLS.map(([label, icon]) => (
          <button type="button" key={label} aria-label={label} className="w-5 border border-[#58b8e0] bg-[#3890c0]"><svg viewBox="0 0 18 18" className="h-[18px] w-[18px]">{icon}</svg></button>
        ))}
        <Bell className="w-5" />
      </div>
    </section>
  );
}

/* ---------- intraday chart ---------- */

const PRICE_LINE = [5, 480, 32, 480, 32, 560, 36, 400, 42, 230, 46, 230, 49, 605, 54, 605, 57, 483, 60, 605, 63, 560, 68, 745, 75, 755, 78, 500, 85, 473, 90, 590, 100, 630, 106, 718, 110, 570, 118, 512, 122, 558, 126, 400, 131, 485, 136, 345, 139, 345, 146, 397, 152, 240, 157, 118, 162, 255, 168, 295, 173, 200, 180, 62, 187, 62, 191, 180, 196, 248, 202, 182, 208, 290, 212, 330, 218, 320, 219, 250, 223, 265, 228, 215, 237, 195, 248, 213, 252, 345, 258, 470, 265, 380, 270, 480, 276, 545, 282, 495, 286, 437, 290, 510, 293, 480, 298, 595, 304, 505, 308, 535, 312, 515, 317, 528, 322, 495, 327, 530, 331, 585, 336, 650, 340, 597, 345, 707, 350, 720, 355, 622, 360, 717, 366, 655, 369, 660, 374, 605, 380, 680, 388, 710, 394, 845, 398, 715, 403, 690, 406, 662, 410, 695, 415, 672, 419, 685, 424, 695, 430, 622, 438, 725, 442, 710, 447, 765, 454, 780, 460, 735, 464, 717, 467, 735, 476, 735];
const INDEX_LINE = [36, 445, 40, 400, 44, 365, 55, 380, 68, 410, 80, 438, 95, 443, 110, 455, 125, 458, 140, 456, 150, 445, 158, 420, 175, 408, 187, 388, 207, 377, 240, 374, 265, 374, 280, 379, 300, 384, 330, 390, 350, 402, 385, 412, 396, 428, 410, 433, 450, 436, 464, 438];
const AVG_LINE = [34, 545, 38, 535, 44, 540, 55, 540, 65, 542, 75, 552, 85, 556, 93, 560, 105, 553, 115, 548, 120, 550, 132, 533, 150, 533, 160, 530, 170, 525, 180, 533, 190, 535, 210, 528, 220, 536, 250, 536, 262, 545, 275, 553, 300, 555, 320, 550, 340, 555, 362, 552, 380, 566, 400, 566, 425, 566, 440, 574, 455, 580, 476, 582];
const TICK_VOLUMES = [199, 66, 201, 348, 203, 450, 205, 504, 207, 507, 209, 459, 211, 805, 215, 618, 217, 654, 219, 732, 222, 633, 226, 618, 228, 651, 232, 771, 234, 741, 236, 744, 238, 777, 240, 762, 242, 768, 246, 741, 248, 750, 250, 744, 252, 768, 254, 771, 256, 800, 258, 687, 260, 681, 262, 705, 264, 717, 266, 720, 268, 745, 270, 708, 272, 745, 275, 597, 277, 540, 279, 558, 281, 693, 283, 729, 285, 735, 287, 765, 290, 760, 293, 738, 295, 564, 297, 741, 299, 720, 301, 741, 303, 756, 305, 753, 307, 786, 309, 790, 312, 792, 315, 726, 317, 774, 319, 786, 322, 798, 324, 780, 327, 792, 330, 792, 333, 796, 336, 798, 339, 762, 342, 732, 344, 744, 346, 708, 348, 723, 350, 780, 353, 780, 356, 684, 358, 690, 361, 768, 364, 765, 366, 780, 369, 795, 371, 687, 373, 792, 375, 765, 377, 780, 379, 792, 382, 803, 386, 800, 389, 790, 392, 785, 395, 711, 397, 714, 399, 774, 401, 726, 403, 708, 406, 768, 409, 783, 413, 750, 416, 790, 419, 777, 422, 800, 425, 783, 428, 765, 430, 765, 432, 558, 434, 687, 436, 741, 439, 771, 441, 780, 443, 800, 446, 805, 449, 800, 455, 800, 458, 780, 461, 803, 464, 774, 467, 780, 470, 792, 473, 800, 477, 798, 480, 805];

const pairs = (flat) => flat.reduce((out, v, i) => (i % 2 ? out : [...out, [v, flat[i + 1]]]), []);
const intradayPoints = (flat) => pairs(flat).map(([x, y]) => `${(730 + x / 3).toFixed(1)},${(230 + y / 3).toFixed(1)}`).join(' ');

const LEFT_AXIS = [['43.40', 194.5, RED], ['42.35', 259.5, RED], ['41.30', 325.5, RED], ['40.25', 390.5, '#fff'], ['39.20', 456.5, GREEN], ['38.15', 522.5, GREEN], ['37.10', 587.5, GREEN], ['4000', 706.5, '#fff'], ['2000', 798.5, '#fff'], ['0', 890.5, '#fff']];

function IntradayChart() {
  return (
    <svg viewBox="664 128 386 794" preserveAspectRatio="xMinYMin meet" className={`${NUM} min-h-0 w-full flex-1 text-[15px]`}>
      <path d="M732 194.500H1047M732 259.500H1047M732 325.500H1047M732 456.500H1047M732 522.500H1047M732 587.500H1047M732 706.500H1047M732 798.500H1047" stroke="#333" />
      <path d="M741.500 141V890M806.500 141V890M872.500 141V890M937.500 141V890M1003.500 141V890M1036.500 141V890" stroke="#333" />
      <path d="M732 390.500H1047" stroke="#305868" />
      <path d="M732 641H1047" stroke="#c0c0c0" strokeWidth="2" />
      {pairs(TICK_VOLUMES).map(([x, y]) => (
        <rect key={x} x={Math.floor(640 + x / 1.96)} y={Math.round(620 + y / 3)} width="1" height={890 - Math.round(620 + y / 3)} fill="#ff00ff" />
      ))}
      <rect x="731.500" y="140.500" width="316" height="750" fill="none" stroke="#c0c0c0" />
      <path d="M741.500 891V900M806.500 891V900M872.500 891V900M937.500 891V900M1036.500 891V900" stroke="#ffff00" />
      <g fill="none" strokeLinejoin="round">
        <polyline points={intradayPoints(INDEX_LINE)} stroke="#28a038" />
        <polyline points={intradayPoints(AVG_LINE)} stroke="#ff9cff" strokeWidth="2" />
        <polyline points={intradayPoints(PRICE_LINE)} stroke="#ffff00" strokeWidth="2" />
      </g>
      <path d="M806 241.500H791M797 235.500L791 241.500L797 247.500" stroke={RED} strokeWidth="2.500" fill="none" />
      <text x="807" y="247" fill={RED}>42.50</text>
      <path d="M877 521.500H862M868 515.500L862 521.500L868 527.500" stroke="#00a0ff" strokeWidth="2.500" fill="none" />
      <text x="878" y="527" fill="#00a0ff">38.30</text>
      <rect x="679" y="132" width="49" height="17" fill={RED} />
      <rect x="679" y="631" width="49" height="18" fill="#00c000" />
      <g textAnchor="end">
        <text x="728" y="146" fill="#fff">44.25</text>
        <text x="728" y="646" fill="#fff">36.25</text>
        {LEFT_AXIS.map(([t, y, c]) => <text key={t} x="728" y={y + 6} fill={c}>{t}</text>)}
      </g>
      <g fill="#ffff00" textAnchor="middle">
        <text x="746" y="918">9</text><text x="806" y="918">10</text><text x="872" y="918">11</text><text x="937" y="918">12</text><text x="1024" y="918">13:30</text>
      </g>
    </svg>
  );
}

/* ---------- quote stats ---------- */

const W = 'text-white';
const G = 'text-[#00e000]';
const R = 'text-[#ff0000]';

function Stat({ label, value, tone = W, tri, mark, unit, className }) {
  return (
    <div className={`flex items-center ${className}`}>
      <dt className="text-[16px] font-[350] text-white">{label}</dt>
      <dd className={`${NUM} ml-auto flex items-center text-[16px] ${tone}`}>
        {tri && <Tri className="mr-3.5 w-3.5" />}
        {value}
        {mark && <Mark kind={mark} />}
        {unit && <span className="text-[15px] font-[350]">{unit}</span>}
      </dd>
    </div>
  );
}

function StatRow({ left, right }) {
  return (
    <div className="flex h-[19px] gap-4 leading-[19px]">
      {left && <Stat {...left} className="w-[184px] shrink-0" />}
      {right && <Stat {...right} className="flex-1" />}
    </div>
  );
}

const QUOTE = [
  [{ label: '成交', value: '38.90', tone: G, mark: 'd' }, { label: '時間', value: '11:12:38' }],
  [{ label: '漲跌', value: '1.35', tone: G, tri: true }, { label: '單量', value: '3', tone: G }],
  [{ label: '漲跌幅', value: '-3.35%', tone: G }, { label: '總量', value: '71156' }],
  [{ label: '最高', value: '42.50', tone: R }, { label: '昨量', value: '46242' }],
  [{ label: '最低', value: '38.30', tone: G }, { label: '昨收', value: '40.25' }],
  [{ label: '均價', value: '40.48', tone: R }, { label: '開盤', value: '40.25' }],
  [{ label: '振幅', value: '+10.43' }, { label: '成交值', value: '28.8', unit: '億' }],
  [{ label: '內盤量', value: '36537', tone: G }, { label: '外盤量', value: '31307', tone: R }],
  [{ label: '估計量', value: '88151' }, { label: '本益比', value: '29.03' }],
];
const ODD_LOT = [
  [{ label: '日期', value: '2024/04/15' }, { label: '成交時間', value: '11:12:21' }],
  [{ label: '成交', value: '39.00', tone: G, mark: 'e' }, { label: '漲跌', value: '1.25', tone: G, tri: true }],
  [{ label: '成交股數', value: '753', tone: R }, { label: '漲跌幅', value: '-3.11%', tone: G }],
  [{ label: '總成交股數', value: '58770' }, { label: '最高', value: '42.65', tone: R }],
  [{ label: '整零價差', value: '-0.10' }, { label: '最低', value: '38.80', tone: G }],
  [{ label: '整股成交', value: '38.90', tone: G, mark: 'd' }, { label: '昨收', value: '40.25' }],
];
const TRIAL = [
  [{ label: '試撮價', value: '38.90', tone: G }, { label: '試撮時間', value: '11:12:31' }],
  [{ label: '試撮量', value: '1', tone: G }, null],
];

function Ratio({ inner, outer, value, strip }) {
  return (
    <div className={`${NUM} flex h-5 items-center text-[16px]`}>
      <span className="w-[19px] font-[350] text-[#00e000]">內</span>
      <span className="w-[86px] text-[#00e000]">{inner}</span>
      <div className="flex h-3.5 w-[175px] flex-col border border-white">
        {strip && (
          <div className="flex h-[3px] border-b border-white bg-[#ff0000]"><span className="bg-[#00c000]" style={{ width: `${strip}%` }} /></div>
        )}
        <div className="flex flex-1 bg-[#ff0000]"><span className="border-r border-white bg-[#00c000]" style={{ width: `${value}%` }} /></div>
      </div>
      <span className="ml-1.5 font-[350] text-[#ff0000]">外</span>
      <span className="ml-auto text-[#ff0000]">{outer}</span>
    </div>
  );
}

function Depth({ bidTotal, askTotal, rows, askLeft, wide }) {
  const cols = wide ? 'grid-cols-[53px_63px_60px_82px_10px_55px_1fr_10px]' : 'grid-cols-[42px_74px_60px_82px_10px_55px_1fr_10px]';
  return (
    <div className={`${NUM} text-[16px] text-white`}>
      <div className="flex h-5 items-center leading-5">
        <span className="w-[116px]">{bidTotal}</span>
        <span className="w-[60px] text-right font-[350]">買進</span>
        <span className={`w-[82px] font-[350] ${askLeft ? 'pr-[18px] text-right' : 'text-right'}`}>賣出</span>
        <span className="ml-auto">{askTotal}</span>
      </div>
      {rows.map(([bq, bw, bp, ap, aw, aq]) => (
        <div key={bp} className={`grid h-[19px] items-center text-right leading-[19px] ${cols}`}>
          <span>{bq}</span>
          <span className="ml-auto h-[15px] bg-[#ff58b4]" style={{ width: bw }} />
          <span className={G}>{bp}</span>
          <span className={G}>{ap}</span>
          <span />
          <span className="h-[15px] bg-[#20bcb8]" style={{ width: aw }} />
          <span>{aq}</span>
        </div>
      ))}
    </div>
  );
}

const DEPTH_A = [[9, 14, '38.90', '38.95', 12, 8], [34, 52, '38.85', '39.00', 55, 36], [22, 34, '38.80', '39.05', 14, 9], [33, 50, '38.75', '39.10', 14, 9], [36, 55, '38.70', '39.15', 20, 13]];
const DEPTH_B = [[629, 19, '38.90', '39.00', 44, 1436], [20, 1, '38.85', '39.10', 2, 74], [429, 13, '38.80', '39.30', 12, 405], [104, 3, '38.75', '39.40', 3, 100], [330, 10, '38.70', '39.50', 10, 325]];
const BOTTOM_TABS = ['零股行情', '零股走勢', '零股明細', '模擬試撮'];

function IntradayPanel() {
  return (
    <section className="flex min-w-0 flex-col border border-white bg-black">
      <div className="flex h-[22px] items-center gap-[3px]">
        <RoundButton label="選單" />
        <Tab active className="w-[137px]">協易機 商品盤勢</Tab>
        <Magnifier className="ml-auto mr-px" />
      </div>
      <div className="grid min-h-0 flex-1 grid-cols-[386fr_390fr]">
        <div className="relative flex min-w-0 flex-col">
          <div className={`${NUM} flex h-[22px] items-center whitespace-nowrap pl-[3px] text-[17px]`}>
            <h2 className="w-[101px] font-['Noto_Sans_CJK_TC',sans-serif] text-[16px] font-[350] text-[#c8c8c8]">協易機(4533)</h2>
            <span className="flex h-4 w-4 items-center justify-center bg-[#d81818] text-[11px] text-white">9</span>
            <span className="ml-2 text-[#00e000]">38.90</span>
            <Arrow dir="down" />
            <svg viewBox="0 0 16 14" className="ml-2.5 h-3.5 w-4"><path d="M0 0H16L8 14Z" fill={GREEN} /></svg>
            <span className="ml-1 text-[#00e000]">1.35</span>
            <span className="ml-2 text-white">71156</span>
            <span className="text-[16px] font-[350] text-[#c8c8c8]">張</span>
          </div>
          <IntradayChart />
          <Bell className="absolute bottom-0 left-[3px] h-[18px] w-[18px]" />
        </div>
        <div className="flex min-w-0 flex-col overflow-hidden pl-[3px]">
          <dl className="pr-0.5">{QUOTE.map(([l, r]) => <StatRow key={l.label} left={l} right={r} />)}</dl>
          <div className="pr-0.5">
            <Ratio inner="53.85%" outer="46.15%" value={53.85} strip={59.6} />
            <Depth bidTotal="(134)" askTotal="(75)" rows={DEPTH_A} />
          </div>
          <h3 className="mt-[13px] h-[19px] font-['Noto_Sans_CJK_TC',sans-serif] text-[16px] font-[350] leading-[19px] text-white">協易機(4533) 零股行情</h3>
          <dl className="pr-0.5">{ODD_LOT.map(([l, r]) => <StatRow key={l.label} left={l} right={r} />)}</dl>
          <div className="flex h-[19px]">
            <button type="button" className="h-5 border border-[#aaa] px-0.5 text-[16px] font-[350] leading-[18px] text-white">模擬撮合</button>
          </div>
          <dl className="pr-0.5">{TRIAL.map(([l, r]) => <StatRow key={l.label} left={l} right={r} />)}</dl>
          <div className="pr-0.5">
            <Ratio inner="80.35%" outer="19.65%" value={80.35} />
            <Depth bidTotal="(1512)" askTotal="(2340)" rows={DEPTH_B} askLeft wide />
          </div>
          <div className="mt-auto flex h-[18px] items-center overflow-hidden text-[16px] font-[350] leading-[18px]">
            {BOTTOM_TABS.map((t, i) => (
              <button type="button" key={t} className={`flex h-[18px] shrink-0 items-center whitespace-nowrap border-b ${i ? 'border-[#888] text-[#999]' : 'border-[#888820] bg-[#282400] text-[#ffff00]'}`}>
                <svg viewBox="0 0 5 18" className="h-[18px] w-[5px]"><path d="M0 2L5 18" stroke="#aaa" fill="none" /></svg>
                {t}
                <svg viewBox="0 0 5 18" className="h-[18px] w-[5px]"><path d="M5 2L0 18" stroke="#aaa" fill="none" /></svg>
              </button>
            ))}
            <span className="w-6 shrink-0 overflow-hidden whitespace-nowrap border-b border-[#888] pl-1 text-[#999]">買..</span>
            <span className="ml-auto flex shrink-0">
              {['M9 4L5 8L9 12', 'M4 6L8 11L12 6', 'M7 4L11 8L7 12', 'M5 9V4H9M11 7V12H7'].map((d) => (
                <svg key={d} viewBox="0 0 16 16" className="h-4 w-4"><circle cx="8" cy="8" r="7" fill="#343c44" stroke="#687078" /><path d={d} stroke="#30a8f0" strokeWidth="2.500" fill="none" /></svg>
              ))}
            </span>
          </div>
        </div>
      </div>
    </section>
  );
}

/* ---------- watch list ---------- */

// name, badge, price, mark, change, pct, lots, lot colour, tail, highlighted cells
const STOCKS = [
  ['亞力', 8, '170.0', 'e', '2.00', '+1.19', 2, 'g', '7...', 'plt'],
  ['協易機', 9, '38.90', 'd', '1.35', '-3.35', 3, 'g', '7...', 'pcxlt'],
  ['宏泰', 14, '38.40', 'e', '0.35', '+0.92', 1, 'g', '4...', 'plt'],
  ['合機', 3, '47.35', 'e', '4.30', '+9.99', 1, 'r', '3...', 'L'],
  ['佳能', 11, '39.55', 'e', '0.65', '+1.67', 10, 'g', '3...', 'plt'],
  ['弘憶股', 0, '49.70', 'e', '1.80', '-3.50', 1, 'g', '2...', ''],
  ['第一銅', 7, '52.1', 'e', '0.80', '+1.56', 1, 'r', '2...', ''],
  ['亞航', 7, '44.00', 'e', '3.45', '+8.51', 1, 'r', '2...', ''],
  ['洋華', 10, '66.8', 'e', '2.60', '-3.75', 1, 'r', '1...', ''],
  ['華晶科', 7, '40.80', 'd', '0.20', '-0.49', 4, 'g', '1...', ''],
  ['銘異', 0, '29.70', 'e', '0.90', '+3.13', 8, 'g', '1...', 'plt'],
  ['晟銘電', 3, '72.7', 'd', '1.60', '-2.15', 2, 'g', '1...', ''],
  ['良維', 3, '104.0', 'e', '1.50', '-1.42', 1, 'g', '1...', 'pt'],
  ['皇昌', 0, '46.40', 'd', '0.75', '+1.64', 3, 'g', '1...', ''],
  ['華電', 5, '45.80', 'u', '0.80', '-1.72', 2, 'r', '1...', ''],
  ['合正', 0, '38.55', 'e', '0.00', '0.00', 2, 'r', '1...', ''],
  ['國統', 0, '82.4', 'e', '1.10', '-1.32', 1, 'g', '1...', ''],
  ['中光電', 3, '102.0', 'd', '3.90', '+3.98', 1, 'g', '1...', ''],
  ['永崴投控', 9, '48.75', 'u', '2.20', '+4.73', 1, 'g', '1...', 'pcxt'],
  ['雷虎', 0, '83.4', 'e', '7.50', '+9.88', 10, 'r', '1...', 'L'],
  ['一詮', 2, '71.6', 'e', '2.00', '-2.72', 1, 'g', '1...', ''],
  ['佳龍', 0, '31.45', 'e', '2.40', '+8.26', 1, 'g', '1...', ''],
  ['威剛', 1, '110.5', 'e', '2.50', '-2.21', 2, 'g', '1...', 'pt'],
  ['擎亞', 0, '30.50', 'e', '0.25', '-0.81', 4, 'g', '1...', ''],
  ['奇鋐', 0, '624', 'e', '4.00', '-0.64', 1, 'r', '1...', ''],
  ['寶一', 0, '49.35', 'u', '1.55', '+3.24', 1, 'r', '9...', 'pcxlt'],
  ['金居', 3, '66.1', 'e', '1.10', '-1.64', 1, 'g', '9...', 'plt'],
  ['聯上發', 0, '15.65', 'e', '0.40', '-2.49', 1, 'g', '9...', ''],
  ['漢科', 15, '116.5', 'd', '0.00', '0.00', 1, 'g', '8...', 'pcxlt'],
  ['麗臺', 0, '138.0', 'e', '0.00', '0.00', 1, 'r', '8...', ''],
  ['華城', 14, '886', 'e', '60.00', '-6.34', 1, 'r', '8...', 'plt'],
  ['英濟', 0, '40.90', 'd', '3.75', '-8.40', 2, 'g', '7...', ''],
  ['聯茂', 1, '116.0', 'e', '5.50', '-4.53', 1, 'g', '7...', ''],
  ['雙鴻', 6, '774', 'u', '2.00', '+0.26', 2, 'r', '7...', ''],
  ['長榮航太', 4, '117.5', 'e', '3.50', '+3.07', 3, 'g', '7...', ''],
  ['世紀鋼', 3, '213.0', 'e', '6.50', '+3.15', 1, 'r', '7...', 'pt'],
  ['均豪', 3, '63.3', 'e', '2.60', '-3.95', 1, 'r', '7...', ''],
  ['大將', 0, '24.55', 'e', '1.30', '+5.59', 1, 'r', '6...', ''],
  ['廣明', 4, '92.0', 'e', '5.60', '-5.74', 1, 'r', '6...', ''],
  ['淳安', 0, '31.50', 'e', '2.85', '+9.95', 2, 'r', '6...', 'L'],
];

function Cell({ boxed, children }) {
  return (
    <td className="p-0 pl-px pr-0.5">
      <div className={`flex h-4 items-center justify-end border leading-none ${boxed ? 'border-[#999]' : 'border-transparent'}`}>{children}</div>
    </td>
  );
}

const TH = 'border-r border-[#6070c0] p-0 pr-px font-[350]';

function WatchPanel() {
  return (
    <section className="flex min-w-0 flex-col border border-[#f01010] bg-black">
      <div className="flex h-[22px] items-center gap-px">
        <RoundButton label="選單" />
        <RoundButton label="上一頁" d="M10.500 5L6.500 9L10.500 13" stroke />
        <Tab active className="ml-0.5 w-[284px]">(選股)有量的中小型股[台股] 報價組合</Tab>
        <Tab className="min-w-0 flex-1">五日強勢股 ...</Tab>
        <RoundButton label="下一頁" d="M7.500 5L11.500 9L7.500 13" stroke />
        <Magnifier />
      </div>
      <div className="flex h-[21px] items-center whitespace-nowrap pl-0.5 text-[16px] font-[350] leading-[21px] text-white">
        <span>(選股)有量的中小型股[台股]</span>
        <svg viewBox="0 0 12 7" className="ml-auto h-[7px] w-3"><path d="M0 0H12L6 7Z" fill="#fff" /></svg>
        <button type="button" className="ml-2 border-r border-white pr-px leading-4">雲端監控</button>
        <button type="button" className="ml-[3px] mr-2">欄位</button>
      </div>
      <div className="flex min-h-0 flex-1 gap-0.5 pl-px">
        <div className="min-w-0 flex-1">
          <table className={`${NUM} w-full table-fixed border-collapse text-[16px]`}>
            <colgroup>
              <col className="w-[121px]" /><col className="w-[75px]" /><col className="w-[87px]" /><col className="w-[75px]" /><col className="w-[47px]" /><col />
            </colgroup>
            <thead>
              <tr className="h-[21px] bg-[#080860] leading-5 text-[#7898f0]">
                <th className={`${TH} text-left`}>商品</th>
                <th className={`${TH} text-right`}>成交</th>
                <th className={`${TH} text-right`}>漲跌</th>
                <th className={`${TH} text-right`}>漲幅%</th>
                <th className={`${TH} text-right`}>單量</th>
                <th className={`${TH} text-right`}>
                  <span className="flex items-center justify-end gap-1">...<svg viewBox="0 0 9 9" className="h-[9px] w-[9px]"><path d="M0.500 0.500H8.500L4.500 8Z" fill="none" stroke="#e0e0ff" /></svg></span>
                </th>
              </tr>
            </thead>
            <tbody>
              {STOCKS.map(([name, badge, price, mark, chg, pct, lots, lotTone, tail, boxes], i) => {
                const flat = chg === '0.00';
                const up = pct[0] === '+';
                const tone = flat ? W : up ? R : G;
                return (
                  <tr key={name} className={`h-[19px] ${i % 2 ? 'bg-black' : 'bg-[#202020]'} ${tone}`}>
                    <td className="p-0">
                      <div className="flex h-[19px] items-center whitespace-nowrap pr-0.5 leading-[19px] text-white">
                        <span className="w-[17px] shrink-0 font-['Liberation_Sans',sans-serif] text-[13px] font-normal">{i === 1 ? '>>' : ''}</span>
                        <span className="font-[350]">{name}</span>
                        {badge > 0 && <span className="ml-auto h-[17px] w-[17px] bg-[#d81818] text-center font-['Liberation_Sans',sans-serif] text-[13px] font-normal leading-[17px]">{badge}</span>}
                      </div>
                    </td>
                    <Cell boxed={boxes.includes('p')}>
                      <span className={boxes.includes('L') ? 'bg-[#ff0000] py-px text-white' : ''}>{price}</span>
                      <Mark kind={mark} />
                    </Cell>
                    <Cell boxed={boxes.includes('c')}>{!flat && <Tri up={up} />}{chg}</Cell>
                    <Cell boxed={boxes.includes('x')}>{pct}</Cell>
                    <Cell boxed={boxes.includes('l')}><span className={lotTone === 'g' ? G : R}>{lots}</span></Cell>
                    <Cell boxed={boxes.includes('t')}><span className="text-white">{tail}</span></Cell>
                  </tr>
                );
              })}
            </tbody>
          </table>
        </div>
        <div className="mr-0.5 flex w-5 flex-col border-x border-[#303030]">
          <div className="flex h-[21px] flex-col justify-around bg-[#080860]">
            <svg viewBox="0 0 18 20" className="h-5 w-[18px]"><path d="M16 5.500H3M7 1.500L3 5.500L7 9.500M2 14.500H15M11 10.500L15 14.500L11 18.500" stroke="#00e8ff" strokeWidth="1.300" fill="none" /></svg>
          </div>
          <button type="button" aria-label="上捲" className="flex h-4 items-center justify-center bg-[#808080]"><svg viewBox="0 0 10 6" className="h-1.5 w-2.5"><path d="M1 5L5 1.500L9 5" stroke="#fff" strokeWidth="2" fill="none" /></svg></button>
          <div className="h-16 rounded-sm border border-[#909090] bg-[#787878]" />
          <button type="button" aria-label="下捲" className="mt-auto flex h-4 items-center justify-center bg-[#606060]"><svg viewBox="0 0 10 6" className="h-1.5 w-2.5"><path d="M1 1L5 4.500L9 1" stroke="#fff" strokeWidth="2" fill="none" /></svg></button>
          <button type="button" aria-label="更新" className="flex h-5 items-center justify-center bg-[#e8f0ff]"><svg viewBox="0 0 16 16" className="h-4 w-4"><path d="M4 12C2 9 3 5 6 4M3 3.500H7V7M12 4C14 7 13 11 10 12M13 12.500H9V9" stroke="#3868c8" strokeWidth="1.600" fill="none" /></svg></button>
        </div>
      </div>
    </section>
  );
}

/* ---------- order entry ---------- */

const RAISED = 'border border-t-white border-l-white border-b-[#808080] border-r-[#808080] bg-[#ececec] shadow-[1px_1px_0_#aaa]';
const PICKED = 'border-2 border-black bg-[#ffd83c]';

function Btn({ children, on, className = '' }) {
  return <button type="button" className={`flex h-[23px] items-center justify-center whitespace-nowrap text-[13px] ${on ? PICKED : RAISED} ${className}`}>{children}</button>;
}

function Drop() {
  return <span className="pointer-events-none absolute bottom-px right-px top-px flex w-[15px] items-center justify-center border border-[#999] bg-[#e8e8e8]"><SmallCaret color="#000" /></span>;
}

function Pick({ label, value, className }) {
  return (
    <span className={`relative flex h-[21px] border-2 border-b-white border-l-[#808080] border-r-white border-t-[#808080] bg-white ${className}`}>
      <select aria-label={label} className="w-full appearance-none bg-white pl-0.5 text-[13px] leading-4"><option>{value}</option></select>
      <Drop />
    </span>
  );
}

function Spin({ label, value }) {
  return (
    <label className="flex items-center text-[13px]">
      <span className="mr-2 whitespace-nowrap">{label}</span>
      <span className="relative flex h-[21px] w-[103px] border-2 border-b-white border-l-[#808080] border-r-white border-t-[#808080] bg-white">
        <input defaultValue={value} className="w-full min-w-0 bg-white pl-0.5 text-[14px]" />
        <span className="mr-[17px] flex w-4 shrink-0 flex-col">
          <span className="flex flex-1 items-center justify-center border border-[#999] bg-[#eee]"><svg viewBox="0 0 5 3" className="h-[3px] w-[5px]"><path d="M0 3L2.500 0L5 3Z" /></svg></span>
          <span className="flex flex-1 items-center justify-center border border-[#999] bg-[#eee]"><svg viewBox="0 0 5 3" className="h-[3px] w-[5px]"><path d="M0 0L2.500 3L5 0Z" /></svg></span>
        </span>
        <Drop />
      </span>
    </label>
  );
}

const INFO = 'flex h-5 items-center justify-center border-r border-[#b8b490]';

function OrderPanel() {
  return (
    <section className="flex h-20 shrink-0 text-black">
      <div className="flex w-5 shrink-0 flex-col items-center justify-between bg-[#f0f0f0] pb-2 pt-1">
        <svg viewBox="0 0 14 2" className="h-0.5 w-3.5"><path d="M0 1H14" stroke="#999" strokeWidth="2" strokeDasharray="2 2" /></svg>
        <span className="w-3 text-[12px] leading-[13px]">下單列</span>
        <button type="button" aria-label="關閉下單列" className="flex"><svg viewBox="0 0 8 8" className="h-2 w-2"><path d="M0.500 0.500L7.500 7.500M7.500 0.500L0.500 7.500" stroke="#000" strokeWidth="1.300" /></svg></button>
      </div>
      <div className="relative flex-1 bg-[#fffabc] pl-2.5 pt-2.5">
        <div className="flex h-[27px] items-center">
          <Btn on className="w-[25px]">證</Btn>
          <Btn className="ml-0.5 w-6">期</Btn>
          <Btn className="ml-0.5 w-6">權</Btn>
          <Btn className="ml-[3px] w-6">零</Btn>
          <Pick label="帳號" value="證-模擬交易(內建)-02" className="ml-2.5 w-[201px]" />
          <Btn className="ml-[5px] w-[41px]">設定</Btn>
          <button type="button" className="ml-2 h-[26px] w-[51px] border-2 border-b-[#888] border-l-[#ccc] border-r-[#888] border-t-[#ccc] bg-[#d8d8d8] text-[13px] text-[#707070]">買進</button>
          <button type="button" className="ml-[3px] h-[26px] w-[51px] border-2 border-b-[#888] border-l-[#ccc] border-r-[#888] border-t-[#ccc] bg-[#d8d8d8] text-[13px] text-[#707070]">賣出</button>
          <Pick label="委託條件" value="ROD" className="ml-2 w-16" />
          <div className="ml-2.5 flex border border-b-white border-l-[#b8b490] border-r-white border-t-[#b8b490] text-[15px] font-[350]">
            <span className={`${INFO} w-[51px]`}>資60%</span>
            <span className={`${INFO} w-[52px]`}>券90%</span>
            <span className={`${INFO} w-[52px]`}>可空</span>
            <span className={`${INFO} w-[118px]`}>可現沖</span>
            <span className="w-[127px]" />
          </div>
          <label className="ml-1 flex items-center gap-1 text-[13px]">
            <input type="checkbox" className="h-3 w-3 appearance-none border border-[#808080] bg-white" />存至下單匣
          </label>
        </div>
        <div className="mt-2 flex h-[27px] items-center">
          <Pick label="交易單位" value="整股" className="w-20" />
          <Btn on className="ml-1.5 w-8">現</Btn>
          <Btn className="ml-0.5 w-[31px]">資</Btn>
          <Btn className="ml-0.5 w-[31px]">券</Btn>
          <Btn className="ml-2 w-[75px]">代碼</Btn>
          <input aria-label="代碼" defaultValue="4533" className="ml-0.5 h-[21px] w-[50px] border-2 border-b-white border-l-[#808080] border-r-white border-t-[#808080] bg-white pl-0.5 text-[14px]" />
          <span className="flex h-[21px] w-[157px] items-center justify-center border-2 border-b-white border-l-[#808080] border-r-white border-t-[#808080] text-[16px] font-bold leading-none">協易機</span>
          <span className="ml-[11px]"><Spin label="張數" value="" /></span>
          <span className="ml-[11px]"><Spin label="價格" value="38.9" /></span>
          <Btn on className="ml-[5px] w-8">現</Btn>
          <Btn className="ml-0.5 w-[31px] text-[#e02020]">漲</Btn>
          <Btn className="ml-0.5 w-[31px] text-[#209020]">跌</Btn>
          <Btn className="ml-0.5 w-[31px] text-[#203890]">市</Btn>
          <Btn className="ml-2 w-[104px]"><span className="text-[16px] font-bold leading-none text-[#e01818]">模擬下單</span></Btn>
          <Btn className="ml-[3px] w-[34px]">清除</Btn>
        </div>
        <span className="absolute right-7 top-3 text-[46px] font-bold leading-[54px] text-[#a0a0a0]">模擬</span>
        <button type="button" aria-label="關閉" className="absolute right-1.5 top-[5px] flex h-3.5 w-3.5 items-center justify-center border border-black">
          <svg viewBox="0 0 8 8" className="h-2 w-2"><path d="M1 1L7 7M7 1L1 7" stroke="#000" /></svg>
        </button>
      </div>
    </section>
  );
}

/* ---------- status bar ---------- */

function Check({ label, round }) {
  return (
    <span className="flex items-center gap-1">
      {label}
      <span className={`flex h-4 w-4 items-center justify-center border border-b-[#777] border-l-white border-r-[#777] border-t-white ${round ? 'bg-[#d8d8d8]' : 'bg-[#ffffd8]'}`}>
        <svg viewBox="0 0 14 14" className="h-3.5 w-3.5">
          {round && <circle cx="7" cy="7" r="6" fill="#209838" />}
          <path d="M3.500 7.500L6 10L11 3.500" stroke={round ? '#fff' : '#209838'} strokeWidth="2" fill="none" />
        </svg>
      </span>
    </span>
  );
}

function StatusBar() {
  return (
    <footer className="flex h-[21px] shrink-0 items-center overflow-hidden whitespace-nowrap border-t border-[#7880a8] bg-linear-to-b from-[#e4e8f4] to-[#a8b0cc] text-[12px] text-black">
      <button type="button" className="relative ml-1 h-[18px] w-[84px] pl-4 font-bold">
        <svg viewBox="0 0 84 18" className="absolute inset-0 h-full w-full"><path d="M0.500 0.500H83.500V17.500H17C10 17.500 9 5 0.500 0.500Z" fill="#ffcc28" stroke="#777" /></svg>
        <span className="relative">_看盤標記</span>
      </button>
      {[1, 2, 3].map((n) => (
        <button type="button" key={n} className="ml-0.5 h-[18px] w-[46px] rounded-b-sm border border-l-white border-r-[#777] border-b-[#777] border-t-0 bg-[#e4e4e4]">主畫面</button>
      ))}
      <span className="ml-2.5 text-[#101080]">本系統為嘉實資訊XQ系列產品</span>
      <div className="ml-auto flex items-center pr-2">
        {[['下單匣', 'w-[42px]'], ['下單列', 'w-[43px]'], ['回報列', 'w-[40px]'], ['主動回報', 'w-[55px]']].map(([t, w]) => (
          <button type="button" key={t} className={`mr-0.5 flex h-[17px] items-center justify-center border border-b-[#888] border-l-white border-r-[#888] border-t-white bg-[#e8e8e8] ${w}`}>{t}</button>
        ))}
        <svg viewBox="0 0 16 16" className="ml-1 h-4 w-4"><path d="M1 2H15V15H1Z" fill="#fff" stroke="#4a70a8" /><path d="M1 2H15V6H1Z" fill="#d84840" /><path d="M1 9H15M1 12H15M4.500 6V15M8 6V15M11.500 6V15" stroke="#4a70a8" /></svg>
        <svg viewBox="0 0 16 16" className="ml-3.5 h-4 w-4"><path d="M1.500 1.500H14.500V14.500H1.500Z" fill="#d8deec" stroke="#555" strokeWidth="1.500" /><path d="M5 11L11 5M7 5H11V9" stroke="#444" fill="none" /></svg>
        <svg viewBox="0 0 16 16" className="ml-3.5 mr-3.5 h-4 w-4"><path d="M5 7V4.500A3 3 0 0 1 11 4.500V7" fill="none" stroke="#888" strokeWidth="1.600" /><rect x="2.500" y="7" width="11" height="8" rx="1" fill="#b0b0b0" stroke="#777" /><path d="M8 9V13" stroke="#666" strokeWidth="1.500" /></svg>
        <span className="flex items-center gap-2.5">
          <Check label="登入:" round />
          <Check label="報價:" />
          <Check label="回報:" />
          <time className="ml-0.5 text-[#101050]">11:12:40</time>
        </span>
      </div>
    </footer>
  );
}

export default function App() {
  return (
    <div className="flex min-h-screen flex-col bg-[#f0f0f0] font-['Liberation_Sans','Noto_Sans_CJK_TC',sans-serif]">
      <TitleBar />
      <MenuBar />
      <Toolbars />
      <main className="flex flex-1 border-t-2 border-[#70708c] bg-black pr-[3px]">
        <aside className="flex w-[31px] shrink-0 flex-col items-center border-l-2 border-[#888]">
          <svg viewBox="0 0 12 6" className="mt-[15px] h-1.5 w-3"><path d="M0 0H12L6 6Z" fill="#20bcb8" /></svg>
          <button type="button" className="relative mt-3 flex h-[98px] w-[29px] items-center justify-center text-[16px] leading-4 text-[#ffff00]">
            <svg viewBox="0 0 29 98" className="absolute inset-0 h-full w-full"><path d="M29 0V98L3 86C1 85 0 83 0 80V18C0 15 1 13 3 12Z" fill="#20bcb8" /><path d="M4 16V82" stroke="#80e8e0" strokeWidth="3" /></svg>
            <span className="relative w-4">看盤標記</span>
          </button>
        </aside>
        <div className="grid min-w-0 flex-1 grid-cols-[626fr_778fr_473fr] gap-0.5 border-2 border-l-[3px] border-[#20bcb8] py-px pl-px pb-0.5">
          <DailyPanel />
          <IntradayPanel />
          <WatchPanel />
        </div>
      </main>
      <div className="flex h-[5px] items-center bg-[#f0f0f0]">
        <svg viewBox="0 0 62 3" className="mx-auto h-[3px] w-[62px]"><path d="M0 1.500H62" stroke="#aaa" strokeWidth="2" strokeDasharray="2 2" /></svg>
      </div>
      <OrderPanel />
      <StatusBar />
    </div>
  );
}
